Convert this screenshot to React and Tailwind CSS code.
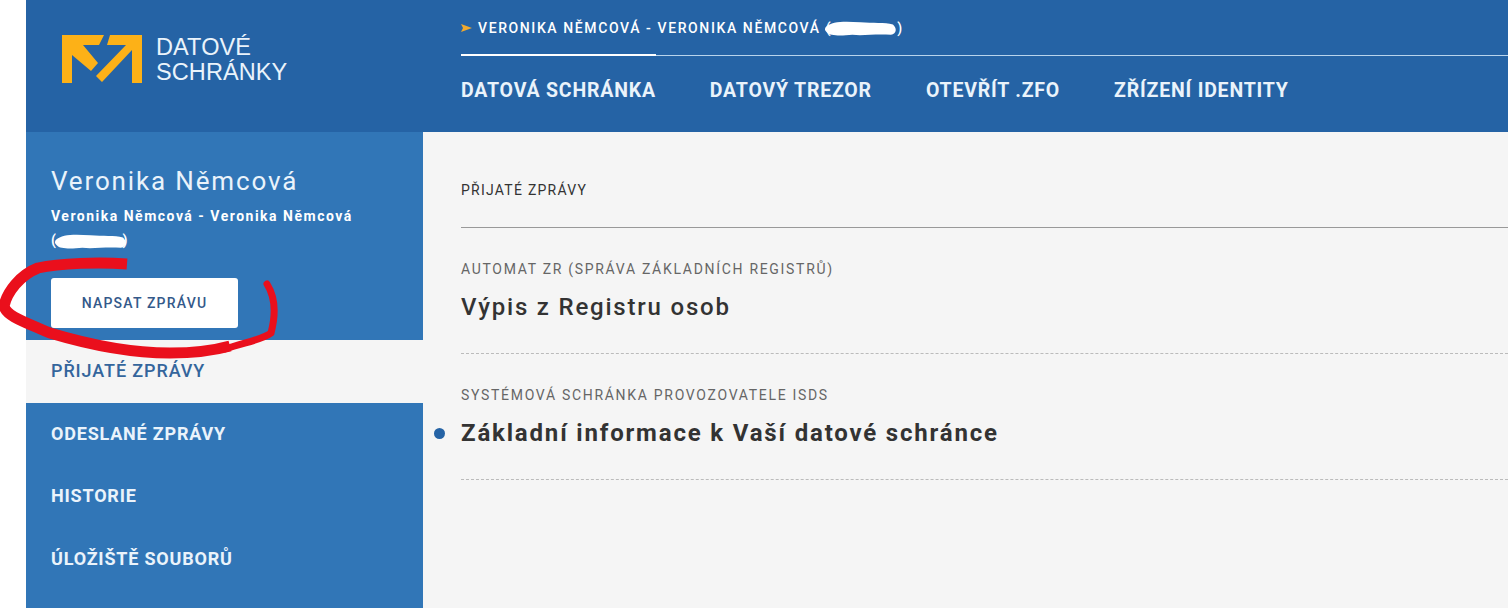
const sideItems = ['ODESLANÉ ZPRÁVY', 'HISTORIE', 'ÚLOŽIŠTĚ SOUBORŮ'];
const topItems = ['DATOVÁ SCHRÁNKA', 'DATOVÝ TREZOR', 'OTEVŘÍT .ZFO', 'ZŘÍZENÍ IDENTITY'];

function Logo() {
  return (
    <svg width="82" height="48" viewBox="0 0 82 48" className="shrink-0">
      <path fill="#fdb117" d="M1 0H43L38 10H22L37 28L30 36L11 20V48H1Z" />
      <path fill="#fdb117" d="M49 0H81V48H71V15L41 47L35 41L65 10H46Z" />
    </svg>
  );
}

// white paint stroke that hides the ID in the screenshot
function Blot({ className }) {
  return (
    <svg viewBox="0 0 72 14" preserveAspectRatio="none" className={`inline-block ${className}`}>
      <path fill="#fff" d="M2 6C8 1 20 1 36 2C48 3 60 2 68 4C72 7 72 12 66 13C50 12 40 14 28 13C16 14 6 14 3 11C0 9 1 7 2 6Z" />
    </svg>
  );
}

export default function App() {
  return (
    <div className="w-[1508px] h-[608px] overflow-hidden bg-white pl-[26px] font-['Roboto',sans-serif] relative">
      <header className="flex h-[132px] bg-[#2563a5] text-white">
        <div className="w-[435px] pl-[35px] pt-[35px] flex items-start gap-[13px]">
          <Logo />
          <div className="font-['Liberation_Sans',sans-serif] text-[23.5px] leading-[25px] tracking-[0.1px] text-[#eaf3fb]">
            DATOVÉ<br />SCHRÁNKY
          </div>
        </div>
        <div className="flex-1 min-w-0">
          <div className="h-[56px] border-b border-[#b9d4ec] relative">
            <div className="pt-[18px] text-[14px] leading-[20px] font-medium tracking-[1.6px] flex items-center">
              <svg width="11" height="8" viewBox="0 0 11 8" className="mr-[6px] shrink-0">
                <path fill="#f0a92e" d="M0 0L11 4L0 8L2 4Z" />
              </svg>
              VERONIKA NĚMCOVÁ - VERONIKA NĚMCOVÁ (
              <Blot className="w-[73px] h-[16px] -ml-[8px]" />)
            </div>
            <div className="absolute left-0 bottom-[-1px] w-[195px] h-[2px] bg-white" />
          </div>
          <nav className="flex gap-[54px] pt-[23px] text-[19.5px] leading-[24px] font-bold tracking-[0.8px] text-[#eaf3fb]">
            {topItems.map(t => <span key={t}>{t}</span>)}
          </nav>
        </div>
      </header>

      <div className="flex h-[476px]">
        <aside className="w-[397px] bg-[#3176b7] text-white shrink-0">
          <div className="h-[208px] pl-[25px] pt-[33px]">
            <div className="text-[26px] leading-[32px] tracking-[1.85px] text-[#eaf3fb]">Veronika Němcová</div>
            <div className="mt-[7px] h-[48px] text-[14px] leading-[24px] font-bold tracking-[1.5px]">
              Veronika Němcová - Veronika Němcová
              <br />(<Blot className="w-[73px] h-[16px] -ml-[3px] align-middle" /><span className="-ml-[5px]">)</span>
            </div>
            <button className="mt-[26px] block w-[187px] h-[50px] bg-white rounded-[3px] text-[14px] font-medium tracking-[1.2px] text-[#34598a]">
              NAPSAT ZPRÁVU
            </button>
          </div>
          <div className="h-[63px] bg-[#f5f5f5] pl-[25px] pb-[2px] flex items-center text-[18px] font-medium tracking-[0.9px] text-[#34659c]">
            PŘIJATÉ ZPRÁVY
          </div>
          {sideItems.map(t => (
            <div key={t} className="h-[62.5px] pl-[25px] pb-[2px] flex items-center text-[18px] font-bold tracking-[0.8px] text-[#eaf3fb]">
              {t}
            </div>
          ))}
        </aside>

        <main className="flex-1 bg-[#f5f5f5] pl-[38px] text-[#333]">
          <div className="h-[96px] border-b border-[#999] pt-[48px] text-[14px] leading-[20px] tracking-[1.25px]">
            PŘIJATÉ ZPRÁVY
          </div>
          <div className="h-[126px] border-b border-dashed border-[#bbb] pt-[31px]">
            <div className="text-[14px] leading-[20px] tracking-[1.7px] text-[#666]">AUTOMAT ZR (SPRÁVA ZÁKLADNÍCH REGISTRŮ)</div>
            <div className="mt-[13px] text-[24px] leading-[30px] font-medium tracking-[1.8px]">Výpis z Registru osob</div>
          </div>
          <div className="h-[126px] border-b border-dashed border-[#bbb] pt-[31px] relative">
            <div className="text-[14px] leading-[20px] tracking-[1.7px] text-[#666]">SYSTÉMOVÁ SCHRÁNKA PROVOZOVATELE ISDS</div>
            <div className="mt-[13px] text-[24px] leading-[30px] font-bold tracking-[1.82px]">Základní informace k Vaší datové schránce</div>
            <span className="absolute left-[-27px] top-[74px] w-[11px] h-[11px] rounded-full bg-[#2563a5]" />
          </div>
        </main>
      </div>

      {/* red marker scribble drawn over the button */}
      <svg className="absolute left-0 top-0 pointer-events-none" width="300" height="370" fill="none" stroke="#ea0f1c">
        <path
          d="M127 264C100 262 60 263 38 268C20 275 7 292 4 306C6 316 25 322 50 333C90 345 130 353 170 353C195 353 212 351 230 346"
          strokeWidth="11"
        />
        <path
          d="M225 349C245 342 262 340 271 333C275 318 277 300 267 284"
          strokeWidth="7"
          strokeLinecap="round"
        />
      </svg>
    </div>
  );
}
